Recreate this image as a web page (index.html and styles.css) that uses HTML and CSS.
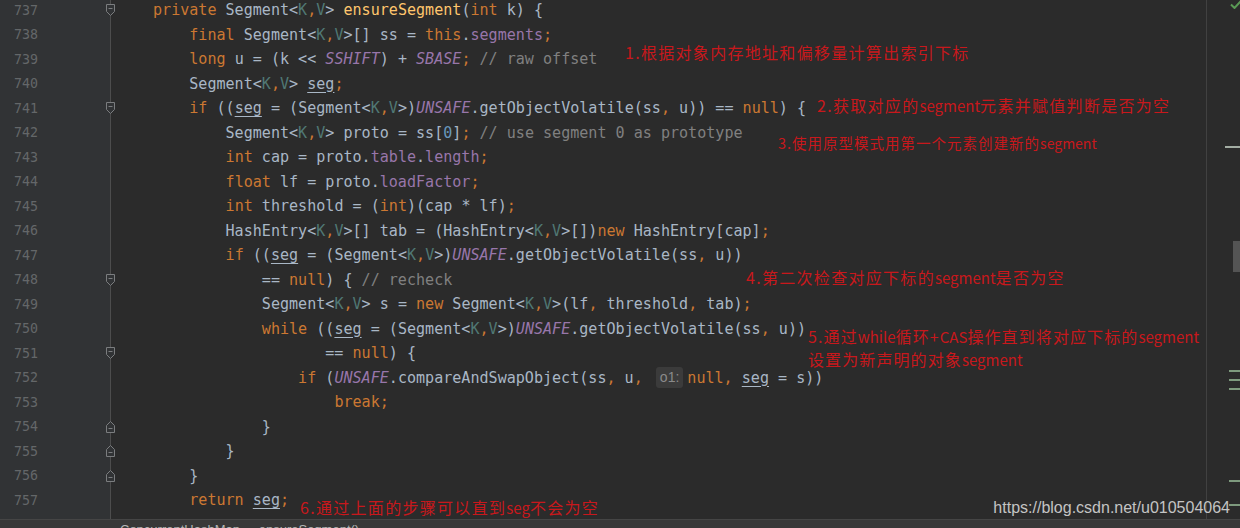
FILE: index.html
```html
<!DOCTYPE html>
<html lang="zh-CN">
<head>
  <meta charset="UTF-8">
  <meta name="viewport" content="width=device-width, initial-scale=1.0">
  <title>ConcurrentHashMap.ensureSegment</title>
  <link rel="stylesheet" href="styles.css">
</head>
<body>
  <div class="ide">
    <div class="editor">
      <div class="gutter">
        <div class="rows">
          <div class="ln"><span>737</span><svg class="fold" viewBox="0 0 11 14"><path d="M1.5 1.5H9.5V8.5L5.5 12.5L1.5 8.5Z M3.5 5.5H7.5"/></svg></div>
          <div class="ln"><span>738</span></div>
          <div class="ln"><span>739</span></div>
          <div class="ln"><span>740</span></div>
          <div class="ln"><span>741</span><svg class="fold" viewBox="0 0 11 14"><path d="M1.5 1.5H9.5V8.5L5.5 12.5L1.5 8.5Z M3.5 5.5H7.5"/></svg></div>
          <div class="ln"><span>742</span></div>
          <div class="ln"><span>743</span></div>
          <div class="ln"><span>744</span></div>
          <div class="ln"><span>745</span></div>
          <div class="ln"><span>746</span></div>
          <div class="ln"><span>747</span></div>
          <div class="ln"><span>748</span><svg class="fold" viewBox="0 0 11 14"><path d="M1.5 1.5H9.5V8.5L5.5 12.5L1.5 8.5Z M3.5 5.5H7.5"/></svg></div>
          <div class="ln"><span>749</span></div>
          <div class="ln"><span>750</span></div>
          <div class="ln"><span>751</span><svg class="fold" viewBox="0 0 11 14"><path d="M1.5 1.5H9.5V8.5L5.5 12.5L1.5 8.5Z M3.5 5.5H7.5"/></svg></div>
          <div class="ln"><span>752</span></div>
          <div class="ln"><span>753</span></div>
          <div class="ln"><span>754</span><svg class="fold" viewBox="0 0 11 14"><path d="M1.5 12.5H9.5V5.5L5.5 1.5L1.5 5.5Z M3.5 8.5H7.5"/></svg></div>
          <div class="ln"><span>755</span><svg class="fold" viewBox="0 0 11 14"><path d="M1.5 12.5H9.5V5.5L5.5 1.5L1.5 5.5Z M3.5 8.5H7.5"/></svg></div>
          <div class="ln"><span>756</span><svg class="fold" viewBox="0 0 11 14"><path d="M1.5 12.5H9.5V5.5L5.5 1.5L1.5 5.5Z M3.5 8.5H7.5"/></svg></div>
          <div class="ln"><span>757</span></div>
        </div>
      </div>

      <div class="code">
        <div class="rows">
<div class="line"><span class="k">private</span> Segment&lt;<span class="g">K</span><span class="k">,</span><span class="g">V</span>&gt; <span class="m">ensureSegment</span>(<span class="k">int</span> k) {</div>
<div class="line">    <span class="k">final</span> Segment&lt;<span class="g">K</span><span class="k">,</span><span class="g">V</span>&gt;[] ss = <span class="k">this</span>.<span class="f">segments</span><span class="k">;</span></div>
<div class="line">    <span class="k">long</span> u = (k &lt;&lt; <span class="s">SSHIFT</span>) + <span class="s">SBASE</span><span class="k">;</span> <span class="c">// raw offset</span></div>
<div class="line">    Segment&lt;<span class="g">K</span><span class="k">,</span><span class="g">V</span>&gt; <span class="u">seg</span><span class="k">;</span></div>
<div class="line">    <span class="k">if</span> ((<span class="u">seg</span> = (Segment&lt;<span class="g">K</span><span class="k">,</span><span class="g">V</span>&gt;)<span class="s">UNSAFE</span>.getObjectVolatile(ss<span class="k">,</span> u)) == <span class="k">null</span>) {</div>
<div class="line">        Segment&lt;<span class="g">K</span><span class="k">,</span><span class="g">V</span>&gt; proto = ss[<span class="n">0</span>]<span class="k">;</span> <span class="c">// use segment 0 as prototype</span></div>
<div class="line">        <span class="k">int</span> cap = proto.<span class="f">table</span>.<span class="f">length</span><span class="k">;</span></div>
<div class="line">        <span class="k">float</span> lf = proto.<span class="f">loadFactor</span><span class="k">;</span></div>
<div class="line">        <span class="k">int</span> threshold = (<span class="k">int</span>)(cap * lf)<span class="k">;</span></div>
<div class="line">        HashEntry&lt;<span class="g">K</span><span class="k">,</span><span class="g">V</span>&gt;[] tab = (HashEntry&lt;<span class="g">K</span><span class="k">,</span><span class="g">V</span>&gt;[])<span class="k">new</span> HashEntry[cap]<span class="k">;</span></div>
<div class="line">        <span class="k">if</span> ((<span class="u">seg</span> = (Segment&lt;<span class="g">K</span><span class="k">,</span><span class="g">V</span>&gt;)<span class="s">UNSAFE</span>.getObjectVolatile(ss<span class="k">,</span> u))</div>
<div class="line">            == <span class="k">null</span>) { <span class="c">// recheck</span></div>
<div class="line">            Segment&lt;<span class="g">K</span><span class="k">,</span><span class="g">V</span>&gt; s = <span class="k">new</span> Segment&lt;<span class="g">K</span><span class="k">,</span><span class="g">V</span>&gt;(lf<span class="k">,</span> threshold<span class="k">,</span> tab)<span class="k">;</span></div>
<div class="line">            <span class="k">while</span> ((<span class="u">seg</span> = (Segment&lt;<span class="g">K</span><span class="k">,</span><span class="g">V</span>&gt;)<span class="s">UNSAFE</span>.getObjectVolatile(ss<span class="k">,</span> u))</div>
<div class="line">                   == <span class="k">null</span>) {</div>
<div class="line">                <span class="k">if</span> (<span class="s">UNSAFE</span>.compareAndSwapObject(ss<span class="k">,</span> u<span class="k">,</span> <span class="hint">o1:</span><span class="k">null</span><span class="k">,</span> <span class="u">seg</span> = s))</div>
<div class="line">                    <span class="k">break;</span></div>
<div class="line">            }</div>
<div class="line">        }</div>
<div class="line">    }</div>
<div class="line">    <span class="k">return</span> <span class="u">seg</span><span class="k">;</span></div>
        </div>
      </div>

      <div class="stripe">
        <svg class="check" viewBox="0 0 12 9"><polyline points="1,4.5 4.5,8 11,1"/></svg>
        <div class="mark wide" style="top: 146px"></div>
        <div class="thumb"></div>
        <div class="mark" style="top: 370px"></div>
        <div class="mark" style="top: 379px"></div>
        <div class="mark" style="top: 388px"></div>
        <div class="mark" style="top: 480px"></div>
        <div class="mark" style="top: 504px"></div>
      </div>
    </div>

    <div class="crumbs">ConcurrentHashMap &nbsp;›&nbsp; ensureSegment()</div>

    <div class="note n1">1.根据对象内存地址和偏移量计算出索引下标</div>
    <div class="note n2">2.获取对应的<span class="lat">segment</span>元素并赋值判断是否为空</div>
    <div class="note n3">3.使用原型模式用第一个元素创建新的<span class="lat">segment</span></div>
    <div class="note n4">4.第二次检查对应下标的<span class="lat">segment</span>是否为空</div>
    <div class="note n5">5.通过<span class="lat">while</span>循环+<span class="lat">CAS</span>操作直到将对应下标的<span class="lat">segment</span><br>设置为新声明的对象<span class="lat">segment</span></div>
    <div class="note n6">6.通过上面的步骤可以直到<span class="lat">seg</span>不会为空</div>

    <div class="watermark">https://blog.csdn.net/u010504064</div>
  </div>
</body>
</html>
```

FILE: styles.css
```css
body {
  margin: 0;
  background-color: #2b2b2b;
  overflow: hidden;
}
.ide {
  position: relative;
  width: 1240px;
  height: 528px;
  overflow: hidden;
  background-color: #2b2b2b;
}
.editor {
  display: flex;
  height: 519px;
  overflow: hidden;
}
.rows {
  margin-top: -2px;
}

/* gutter with line numbers and fold markers */
.gutter {
  width: 110px;
  flex: none;
  background-color: #313335;
  border-right: 1px solid #4d4d4d;
}
.ln {
  display: flex;
  align-items: center;
  height: 24.5px;
  padding-left: 14px;
  font-family: "DejaVu Sans Mono", monospace;
  font-size: 13.3px;
  color: #646769;
}
.fold {
  position: relative;
  z-index: 1;
  width: 11px;
  height: 14px;
  margin-left: auto;
  margin-right: -6px;
  fill: #313335;
  stroke: #7b7d7f;
  stroke-width: 1;
}

/* code */
.code {
  flex: 1;
  padding-left: 42px;
  font-family: "DejaVu Sans Mono", monospace;
  font-size: 15.07px;
  color: #a9b7c6;
}
.line {
  height: 24.5px;
  line-height: 24.5px;
  white-space: pre;
}
.k { color: #cc7832; }
.g { color: #507874; }
.f { color: #9876aa; }
.s { color: #9876aa; font-style: italic; }
.m { color: #ffc66d; }
.n { color: #6897bb; }
.c { color: #808080; }
.u {
  text-decoration: underline;
  text-underline-offset: 3px;
}
.hint {
  display: inline-block;
  margin: 0 4px 0 4px;
  padding: 0 4px;
  line-height: 21px;
  border-radius: 3px;
  background-color: #3b3b3b;
  color: #8a8a8a;
  font-family: "Liberation Sans", sans-serif;
  font-size: 14px;
  vertical-align: 1px;
}

/* error stripe on the right */
.stripe {
  position: relative;
  width: 33px;
  flex: none;
  border-left: 1px solid #414141;
}
.check {
  position: absolute;
  top: 0;
  right: -2px;
  width: 12px;
  height: 9px;
  fill: none;
  stroke: #5a9a55;
  stroke-width: 2;
}
.mark {
  position: absolute;
  left: 22px;
  width: 11px;
  height: 2px;
  background-color: #7e9a7e;
}
.mark.wide {
  left: 18px;
  width: 15px;
  background-color: #a3ada3;
}
.thumb {
  position: absolute;
  top: 241px;
  left: 26px;
  width: 7px;
  height: 31px;
  background-color: #545454;
}

/* breadcrumbs bar, mostly cut off */
.crumbs {
  height: 8px;
  overflow: hidden;
  padding-left: 120px;
  border-top: 1px solid #454545;
  background-color: #383838;
  font-family: "Liberation Sans", sans-serif;
  font-size: 13px;
  line-height: 20px;
  color: #b4b4b4;
}

/* red notes written over the screenshot */
.note {
  position: absolute;
  font-family: "Noto Sans CJK SC", sans-serif;
  font-size: 16px;
  line-height: 22px;
  letter-spacing: 1.3px;
  color: #c8181c;
  white-space: nowrap;
}
.note .lat {
  font-size: 15px;
  letter-spacing: 0;
}
.n1 { left: 625px; top: 41px; }
.n2 { left: 817px; top: 94px; }
.n3 { left: 778px; top: 132px; font-size: 14.5px; letter-spacing: 1px; }
.n3 .lat { font-size: 14px; }
.n4 { left: 746px; top: 266px; }
.n5 { left: 808px; top: 325px; letter-spacing: 1.1px; }
.n6 { left: 300px; top: 496px; }

.watermark {
  position: absolute;
  right: 10px;
  top: 498px;
  font-family: "Liberation Sans", sans-serif;
  font-size: 16px;
  line-height: 20px;
  color: #c4c4c4;
}
```
